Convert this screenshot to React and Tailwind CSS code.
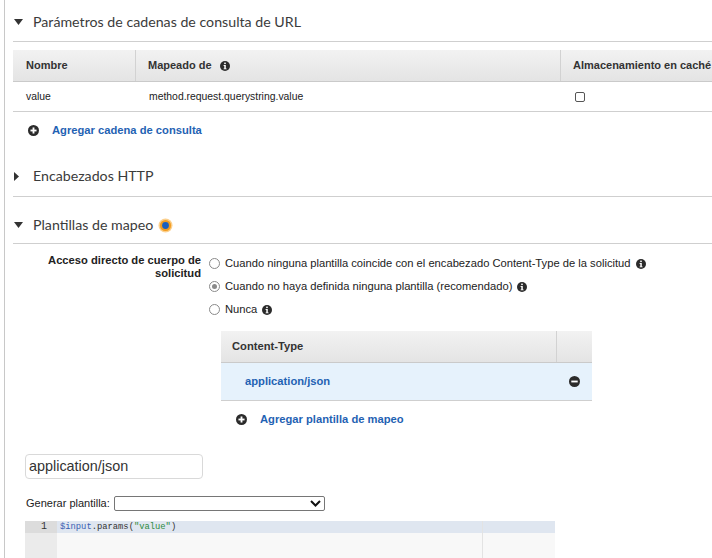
import React from "react";

const sans = { fontFamily: '"Liberation Sans", Arial, sans-serif' };

function InfoIcon({ size = 10 }) {
    return (
        <svg width={size} height={size} viewBox="0 0 10 10" className="inline-block shrink-0">
            <circle cx="5" cy="5" r="5" fill="#2b2b2b" />
            <rect x="4.2" y="1.6" width="1.6" height="1.5" fill="#fff" />
            <path d="M3.6 4h2.2v3.4h0.8v0.9H3.6v-0.9h0.7V4.9h-0.7z" fill="#fff" />
        </svg>
    );
}

function PlusCircle() {
    return (
        <svg width="11" height="11" viewBox="0 0 12 12" className="shrink-0">
            <circle cx="6" cy="6" r="6" fill="#2b2b2b" />
            <rect x="2.7" y="5" width="6.6" height="2" fill="#fff" />
            <rect x="5" y="2.7" width="2" height="6.6" fill="#fff" />
        </svg>
    );
}

function MinusCircle() {
    return (
        <svg width="11" height="11" viewBox="0 0 12 12" className="shrink-0">
            <circle cx="6" cy="6" r="6" fill="#2b2b2b" />
            <rect x="2.5" y="5" width="7" height="2" fill="#fff" />
        </svg>
    );
}

function Caret({ open }) {
    return open ? (
        <svg width="9" height="6" viewBox="0 0 9 6" className="shrink-0">
            <path d="M0 0h9L4.5 6z" fill="#333" />
        </svg>
    ) : (
        <svg width="5" height="9" viewBox="0 0 5 9" className="shrink-0">
            <path d="M0 0l5 4.5L0 9z" fill="#333" />
        </svg>
    );
}

function Radio({ checked }) {
    return (
        <span className="w-[11px] h-[11px] rounded-full border border-[#8a8a8a] bg-white flex items-center justify-center shrink-0">
            {checked && <span className="w-[5px] h-[5px] rounded-full bg-[#8a8a8a]" />}
        </span>
    );
}

function SectionHeader({ title, open, pt, pb, children }) {
    return (
        <div className="flex items-center border-b border-[#cfcfcf]" style={{ paddingTop: pt, paddingBottom: pb }}>
            <span className="w-[20px] flex justify-start pl-[1px]">
                <Caret open={open} />
            </span>
            <span className="text-[14.2px] leading-[20px] text-[#3b3b3b]" style={{ fontFamily: 'Lato, "Open Sans", sans-serif' }}>
                {title}
            </span>
            {children}
        </div>
    );
}

export default function App() {
    return (
        <div className="w-[712px] h-[558px] overflow-hidden bg-white pl-[4px] text-[#222] text-[11.2px]" style={sans}>
            <div className="h-full border-l border-[#c8c8c8] pl-[8px]">
                <SectionHeader title="Parámetros de cadenas de consulta de URL" open pt={12} pb={9} />

                {/* Query string table */}
                <div className="mt-[8px]">
                    <div className="flex h-[32px] items-center border-b border-[#cacaca] bg-gradient-to-b from-[#f2f2f2] to-[#e4e4e4] font-bold text-[#333] text-[11px]">
                        <div className="w-[123px] h-full flex items-center pl-[13px] border-r border-[#d2d2d2]">Nombre</div>
                        <div className="w-[425px] h-full flex items-center gap-[8px] pl-[12px] border-r border-[#d2d2d2]">
                            Mapeado de <InfoIcon />
                        </div>
                        <div className="flex-1 h-full flex items-center pl-[12px] whitespace-nowrap overflow-hidden">Almacenamiento en caché</div>
                    </div>
                    <div className="flex h-[30px] items-center border-b border-[#cfcfcf] text-[10.4px]">
                        <div className="w-[123px] pl-[13px]">value</div>
                        <div className="w-[425px] pl-[13px]">method.request.querystring.value</div>
                        <div className="flex-1 pl-[14px]">
                            <span className="block w-[10px] h-[10px] rounded-[2px] border border-[#555] bg-white" />
                        </div>
                    </div>
                </div>

                <div className="h-[36px] flex items-center pl-[15px] gap-[13px] font-bold text-[#1f62b3]">
                    <PlusCircle />
                    <span>Agregar cadena de consulta</span>
                </div>

                <SectionHeader title="Encabezados HTTP" pt={18} pb={10} />

                <SectionHeader title="Plantillas de mapeo" open pt={18} pb={8}>
                    <svg width="15" height="15" viewBox="0 0 15 15" className="ml-[5px]">
                        <circle cx="7.5" cy="7.5" r="7" fill="#fbd08e" />
                        <circle cx="7.5" cy="7.5" r="5.6" fill="#f39c1f" />
                        <circle cx="7.5" cy="7.5" r="3.4" fill="#1b5fbe" />
                    </svg>
                </SectionHeader>

                {/* Passthrough options */}
                <div className="flex pt-[9px]">
                    <div className="w-[188px] text-right font-bold text-[#222] leading-[13px] pt-[1px]">
                        Acceso directo de cuerpo de
                        <br />
                        solicitud
                    </div>
                    <div className="pl-[8px] pt-[4px] flex flex-col gap-[10px]">
                        <label className="flex items-center gap-[5px] h-[13px]">
                            <Radio />
                            <span>Cuando ninguna plantilla coincide con el encabezado Content-Type de la solicitud</span>
                            <InfoIcon />
                        </label>
                        <label className="flex items-center gap-[5px] h-[13px]">
                            <Radio checked />
                            <span>Cuando no haya definida ninguna plantilla (recomendado)</span>
                            <InfoIcon />
                        </label>
                        <label className="flex items-center gap-[5px] h-[13px]">
                            <Radio />
                            <span>Nunca</span>
                            <InfoIcon />
                        </label>
                    </div>
                </div>

                {/* Content-Type table */}
                <div className="ml-[208px] w-[371px] mt-[15px]">
                    <div className="flex h-[32px] border-b border-[#cacaca] bg-gradient-to-b from-[#f2f2f2] to-[#e4e4e4] font-bold text-[#333]">
                        <div className="w-[336px] flex items-center pl-[11px] border-r border-[#d2d2d2]">Content-Type</div>
                        <div className="flex-1" />
                    </div>
                    <div className="flex h-[38px] items-center border-b border-[#cfcfcf] bg-[#e6f2fc]">
                        <div className="w-[336px] pl-[24px] font-bold text-[#1f62b3]">application/json</div>
                        <div className="flex-1 flex justify-center">
                            <MinusCircle />
                        </div>
                    </div>
                    <div className="h-[36px] flex items-center pl-[15px] gap-[13px] font-bold text-[#1f62b3]">
                        <PlusCircle />
                        <span>Agregar plantilla de mapeo</span>
                    </div>
                </div>

                {/* Template editor */}
                <div className="ml-[12px] mt-[17px] w-[178px] h-[25px] rounded-[4px] border border-[#d9d9d9] flex items-center pl-[3px] text-[14.4px] text-[#333]">
                    application/json
                </div>

                <div className="ml-[13px] mt-[16px] flex items-center gap-[4px] text-[11px] text-[#222]">
                    <span>Generar plantilla:</span>
                    <div className="w-[211px] h-[15px] border border-[#767676] rounded-[2px] flex items-center justify-end pr-[3px] bg-white">
                        <svg width="11" height="7" viewBox="0 0 11 7">
                            <path d="M1 1l4.5 4.5L10 1" stroke="#111" strokeWidth="2" fill="none" />
                        </svg>
                    </div>
                </div>

                <div className="ml-[12px] mt-[9px] w-[530px] h-[40px] flex bg-[#f8f8f8] text-[8.8px] leading-[12px]" style={{ fontFamily: '"Liberation Mono", "DejaVu Sans Mono", monospace' }}>
                    <div className="w-[32px] bg-[#ebebeb] text-[#333] text-[10px]">
                        <div className="h-[12px] bg-[#dcdcdc] text-right pr-[10px]">1</div>
                    </div>
                    <div className="flex-1 relative">
                        <div className="h-[12px] bg-[#dfe6f0] pl-[3px] whitespace-pre">
                            <span className="text-[#3a5fb3]">$input</span>
                            <span className="text-[#333]">.params(</span>
                            <span className="text-[#2e8b3d]">"value"</span>
                            <span className="text-[#333]">)</span>
                        </div>
                        <div className="absolute top-0 bottom-0 left-[425px] w-px bg-[#e3e3e3]" />
                    </div>
                </div>
            </div>
        </div>
    );
}
